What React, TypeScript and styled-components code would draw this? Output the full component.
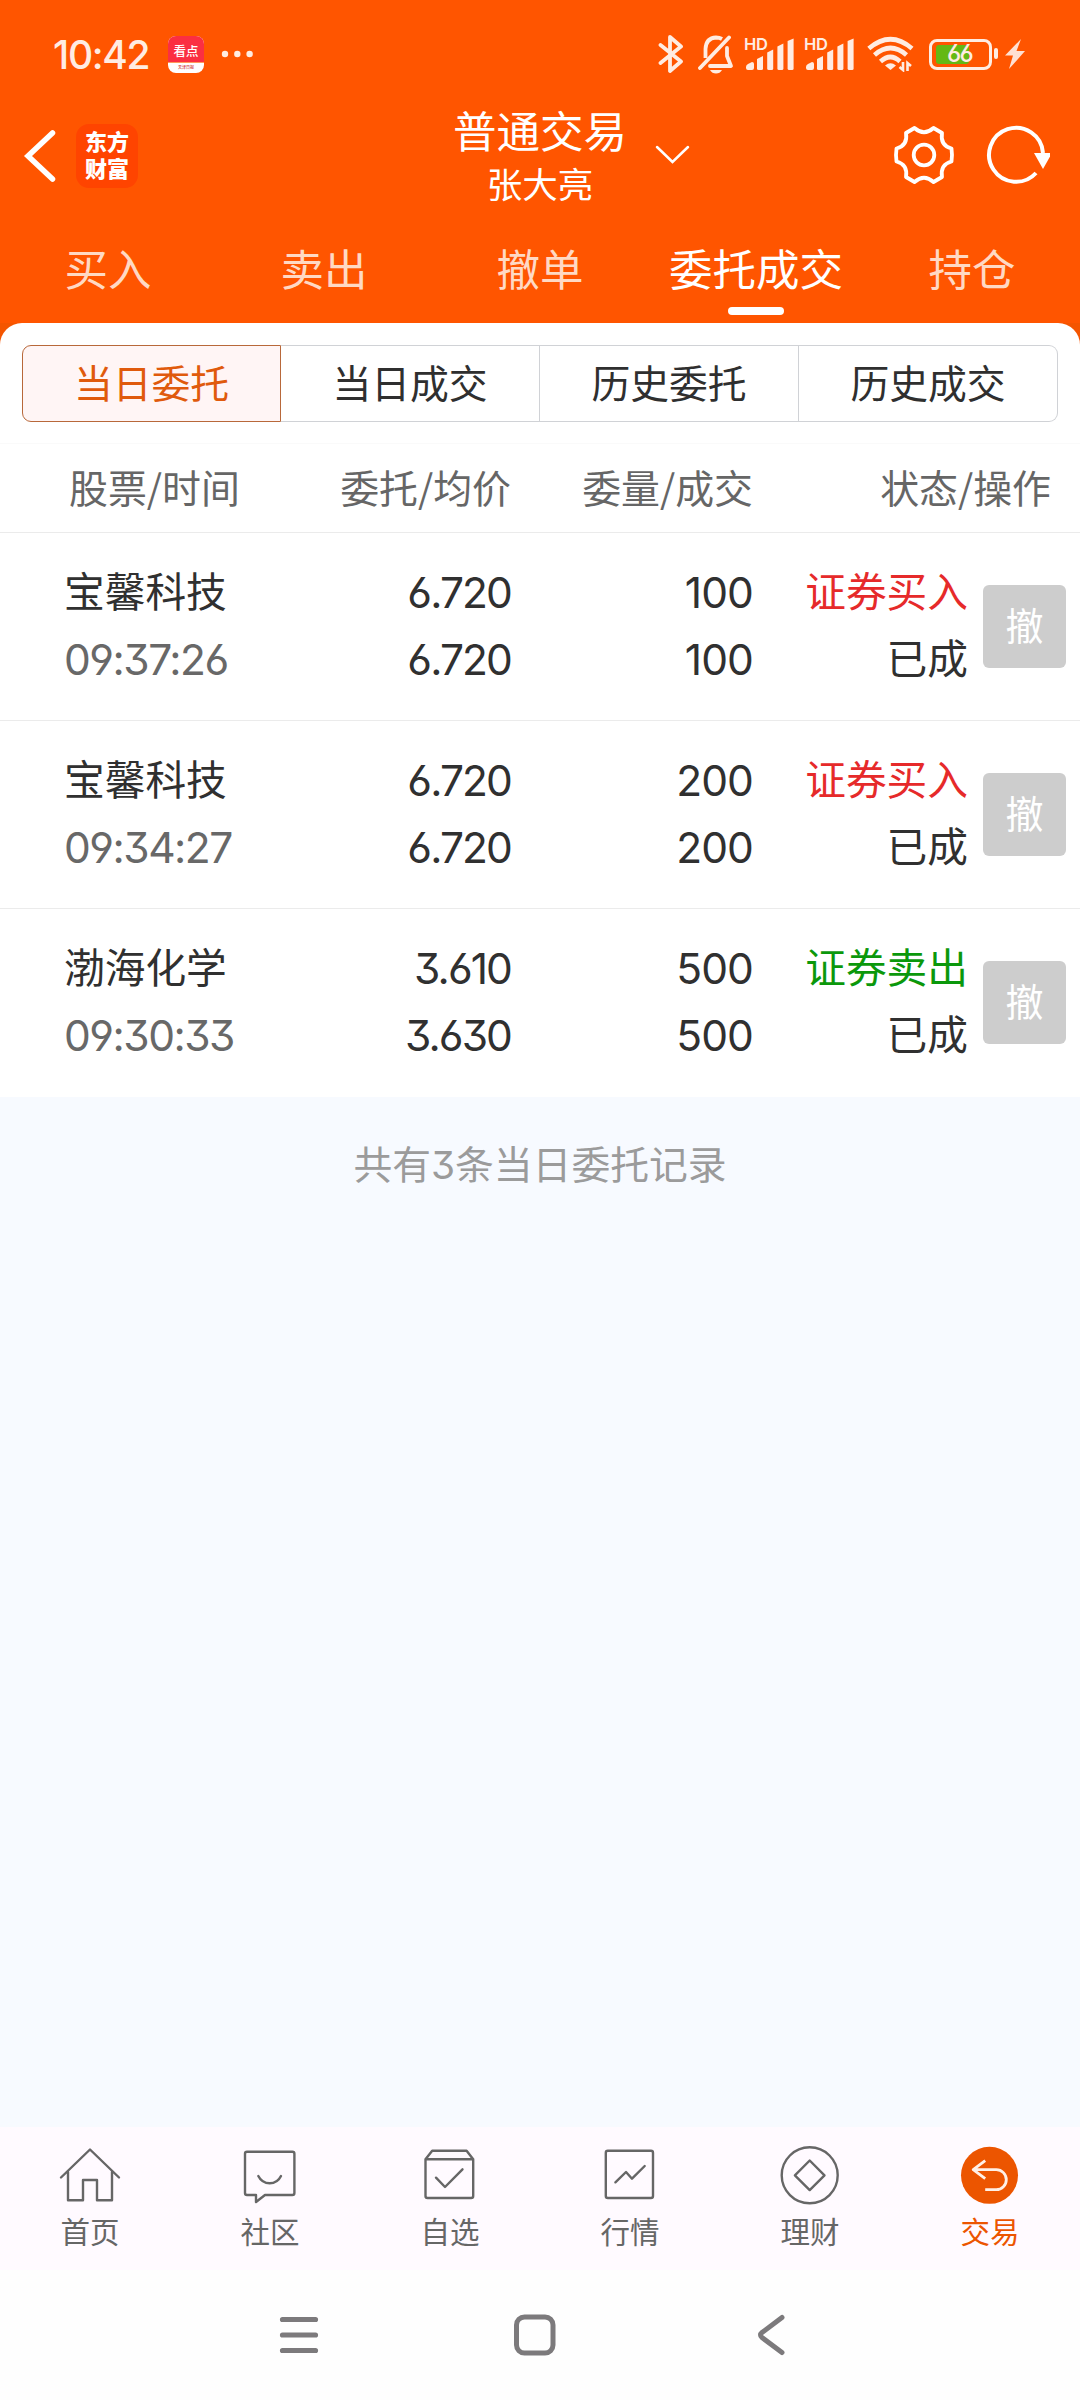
import React from "react";
import styled, { createGlobalStyle } from "styled-components";

const cjk = `"Noto Sans CJK SC", sans-serif`;
const mixed = `Inter, "Noto Sans CJK SC", sans-serif`;
const digits = `"cv03", "cv04", "cv09"`;

const GlobalStyle = createGlobalStyle`
  * { box-sizing: border-box; }
  body { margin: 0; background: #fff; }
  button { font: inherit; border: 0; padding: 0; background: none; color: inherit; }
  svg { display: block; flex: none; }
`;

const Screen = styled.div`
  width: 1080px;
  height: 2400px;
  display: flex;
  flex-direction: column;
  background: #f7faff;
  font-family: ${cjk};
  font-weight: 400;
  overflow: hidden;
`;

const Top = styled.header`
  height: 323px;
  flex: none;
  display: flex;
  flex-direction: column;
  background: #ff5500;
  color: #fff;
`;

const StatusBar = styled.div`
  height: 108px;
  padding: 0 55px 0 53px;
  display: flex;
  align-items: center;
  color: #ffece2;
`;

const Clock = styled.span`
  width: 115px;
  font: 500 39px/1 Inter, sans-serif;
  letter-spacing: -1.3px;
  white-space: nowrap;
`;

const NewsBadge = styled.span`
  width: 36px;
  height: 37px;
  border-radius: 8px;
  display: flex;
  flex-direction: column;
  overflow: hidden;
  background: #fff;
`;

const NewsTop = styled.span`
  height: 27px;
  padding-top: 4px;
  background: #fb2f42;
  border-bottom: 1px solid #ff9a5a;
  color: #fff;
  font: 500 12.5px/22px ${cjk};
  text-align: center;
`;

const NewsBottom = styled.span`
  color: #d0303a;
  font: 500 4px/8px ${cjk};
  text-align: center;
`;

const StatusIcons = styled.div`
  margin-left: auto;
  display: flex;
  align-items: center;
`;

const Gap = styled.span<{ $w: number }>`
  width: ${(p) => p.$w}px;
  flex: none;
`;

const SignalBox = styled.span`
  position: relative;
  width: 51px;
  height: 36px;
`;

const HdLabel = styled.span`
  position: absolute;
  left: 0;
  top: 1px;
  font: 600 16.5px/14px Inter, sans-serif;
  letter-spacing: -0.3px;
`;

const Battery = styled.span`
  width: 63px;
  height: 31px;
  border: 3px solid #ffece2;
  border-radius: 8px;
  padding: 3px 4px;
  display: flex;
`;

const BatteryFill = styled.span`
  width: 33px;
  border-radius: 3px;
  background: #64b814;
  display: flex;
  align-items: center;
  padding-left: 11px;
  font: 500 24px/1 Inter, sans-serif;
  font-feature-settings: ${digits};
  letter-spacing: -1.8px;
`;

const TitleBar = styled.div`
  height: 118px;
  display: grid;
  grid-template-columns: 440px 200px 1fr 190px;
`;

const Left = styled.div`
  display: flex;
  align-items: center;
  padding: 0 0 23px 22px;
  gap: 19px;
`;

const Logo = styled.div`
  width: 62px;
  height: 64px;
  border-radius: 13px;
  background: #ff4400;
  padding: 3px 9px 0;
  font: 900 22px/27px ${cjk};
  word-break: break-all;
`;

const Titles = styled.div`
  display: flex;
  flex-direction: column;
  align-items: center;
`;

const Title = styled.h1`
  margin: -2px 0 0;
  font-size: 43.5px;
  line-height: 48px;
  font-weight: 400;
`;

const Subtitle = styled.div`
  font-size: 35.5px;
  line-height: 58px;
`;

const Caret = styled.div`
  padding: 37px 0 0 14px;
`;

const Actions = styled.div`
  display: flex;
  gap: 28px;
  padding: 15px 0 0 2px;
`;

const Tabs = styled.nav`
  flex: 1;
  display: grid;
  grid-template-columns: repeat(5, 1fr);
`;

const Tab = styled.button<{ $active?: boolean }>`
  display: flex;
  flex-direction: column;
  align-items: center;
  padding-top: 9px;
  font-size: 43.5px;
  line-height: 66px;
  color: ${(p) => (p.$active ? "#fff" : "#ffd9c4")};
  &::after {
    content: "";
    width: 56px;
    height: 8px;
    margin-top: 6px;
    border-radius: 4px;
    background: ${(p) => (p.$active ? "#fff" : "transparent")};
  }
`;

const CardBack = styled.div`
  background: #f45500;
`;

const Card = styled.section`
  background: #fff;
  border-radius: 22px 22px 0 0;
  height: 120px;
  padding: 22px 22px 0;
`;

const Segments = styled.div`
  display: grid;
  grid-template-columns: repeat(4, 1fr);
`;

const Segment = styled.button<{ $active?: boolean }>`
  height: 77px;
  padding-bottom: 5px;
  border: 1px solid ${(p) => (p.$active ? "#b8683a" : "#d0d2d6")};
  border-left-width: ${(p) => (p.$active ? 1 : 0)}px;
  background: ${(p) => (p.$active ? "#fff5f5" : "#fff")};
  color: ${(p) => (p.$active ? "#e05a0c" : "#2f2f2f")};
  font-size: 38.8px;
  line-height: 70px;
  &:first-child { border-radius: 9px 0 0 9px; }
  &:last-child { border-radius: 0 9px 9px 0; }
`;

const HeadRow = styled.div`
  height: 90px;
  display: grid;
  grid-template-columns: 342px 169px 242px 1fr;
  padding: 0 29px 0 0;
  background: #fff;
  border-top: 1px solid #fafafa;
  border-bottom: 1px solid #ebebeb;
  color: #666;
  font-size: 38.9px;
  line-height: 84px;
  text-align: right;
  white-space: nowrap;
`;

const HeadCell = styled.span<{ $first?: boolean }>`
  display: flex;
  justify-content: ${(p) => (p.$first ? "flex-start" : "flex-end")};
  padding-left: ${(p) => (p.$first ? 69 : 0)}px;
`;

const Row = styled.div`
  height: 188px;
  padding-top: 25px;
  display: grid;
  grid-template-columns: 340px 171px 242px 215px 1fr;
  background: #fff;
  border-bottom: 1px solid #ebebeb;
  color: #303030;
  &:last-child { border-bottom: 0; }
`;

const Cell = styled.div<{ $first?: boolean }>`
  display: flex;
  flex-direction: column;
  align-items: ${(p) => (p.$first ? "flex-start" : "flex-end")};
  padding-left: ${(p) => (p.$first ? 64 : 0)}px;
  white-space: nowrap;
`;

const Word = styled.span`
  font-size: 40.7px;
  line-height: 64px;
  padding-bottom: 3px;
`;

const Num = styled.span<{ $muted?: boolean; $track?: number }>`
  font-family: Inter, sans-serif;
  font-feature-settings: ${digits};
  font-size: 42.5px;
  line-height: 64px;
  padding-top: 3px;
  letter-spacing: ${(p) => p.$track ?? -0.9}px;
  color: ${(p) => (p.$muted ? "#686868" : "inherit")};
`;

const Side = styled(Word)<{ $sell?: boolean }>`
  color: ${(p) => (p.$sell ? "#0b980b" : "#e62a2a")};
`;

const Cancel = styled.button`
  width: 83px;
  height: 83px;
  margin: 27px 0 0 15px;
  padding-bottom: 6px;
  border-radius: 6px;
  background: #cdcdcd;
  color: #fff;
  font-size: 38px;
  line-height: 76px;
`;

const Note = styled.p`
  margin: 0;
  padding-top: 38px;
  flex: 1;
  text-align: center;
  color: #9b9b9b;
  font-family: ${mixed};
  font-feature-settings: ${digits};
  font-size: 38.8px;
  line-height: 60px;
`;

const TabBar = styled.nav`
  height: 143px;
  flex: none;
  display: grid;
  grid-template-columns: repeat(6, 1fr);
  background: #fffaff;
`;

const BarItem = styled.button<{ $active?: boolean }>`
  display: flex;
  flex-direction: column;
  align-items: center;
  padding-top: 16px;
  font-size: 29.5px;
  line-height: 47px;
  color: ${(p) => (p.$active ? "#ec5500" : "#666")};
`;

const SystemNav = styled.div`
  height: 130px;
  flex: none;
  display: flex;
  justify-content: center;
  gap: 192px;
  padding: 43px 10px 0 0;
  background: #fefefe;
`;

const Signal = () => (
  <SignalBox>
    <HdLabel>HD</HdLabel>
    <svg width="51" height="36" fill="currentColor">
      <path d="M2 34v-3q0-2 2-3l4-2q2 0 2 2v4q0 2-2 2h-4q-2 0-2-2z" />
      <path d="M13 32.500v-9.500l6-3v12.500q0 1.500-1.500 1.500h-3q-1.500 0-1.500-1.500z" />
      <path d="M23.200 32.500v-16l6-3v19q0 1.500-1.500 1.500h-3q-1.500 0-1.500-1.500z" />
      <path d="M33.400 32.500v-22l6-3v25q0 1.500-1.500 1.500h-3q-1.500 0-1.500-1.500z" />
      <path d="M43.600 32.500v-27.500l6-2.500v30q0 1.500-1.500 1.500h-3q-1.500 0-1.500-1.500z" />
    </svg>
  </SignalBox>
);

const orders = [
  { name: "宝馨科技", time: "09:37:26", price: "6.720", avg: "6.720", qty: "100", sell: false },
  { name: "宝馨科技", time: "09:34:27", price: "6.720", avg: "6.720", qty: "200", sell: false },
  { name: "渤海化学", time: "09:30:33", price: "3.610", avg: "3.630", qty: "500", sell: true },
];

const barIcons: { label: string; art: React.ReactNode }[] = [
  {
    label: "首页",
    art: <path d="M3 34.5L32 6.5L61 34.5M10 29V57.3H25V37H39V57.3H54V29" />,
  },
  {
    label: "社区",
    art: (
      <>
        <path d="M9 8.7H54.4Q56.4 8.7 56.4 10.7V50Q56.4 52 54.4 52H27L18 59V52H9Q7 52 7 50V10.7Q7 8.7 9 8.7Z" />
        <path d="M20.3 33Q24 40.3 31.7 40.3T43 33" />
      </>
    ),
  },
  {
    label: "自选",
    art: (
      <>
        <path d="M7.5 16.3L14.2 7.7H48.6L55.2 16.3V53Q55.2 55 53.2 55H9.5Q7.5 55 7.5 53ZM7.5 16.3H55.2" />
        <path d="M18 34.7L27 44L44.5 26.3" />
      </>
    ),
  },
  {
    label: "行情",
    art: (
      <>
        <rect x="7.8" y="7.7" width="47.2" height="47.3" rx="2" />
        <path d="M17.4 39.3L28 29L34 35.7L46.7 23" />
      </>
    ),
  },
  {
    label: "理财",
    art: (
      <>
        <circle cx="31.7" cy="32.3" r="28" />
        <path d="M31.7 17.5L46.5 32.3L31.7 47.1L16.9 32.3Z" />
      </>
    ),
  },
  {
    label: "交易",
    art: (
      <>
        <circle cx="31.5" cy="32.3" r="28.5" fill="#ec5500" stroke="none" />
        <path stroke="#fff0e6" strokeWidth="2.8" strokeLinecap="butt" d="M27.2 17.7L15.2 26.7L27.2 35.7M15.2 26.7H38.3A10 10 0 0 1 38.3 46.7H27.2" />
      </>
    ),
  },
];

export default function App() {
  return (
    <Screen>
      <GlobalStyle />
      <Top>
        <StatusBar>
          <Clock>10:42</Clock>
          <NewsBadge>
            <NewsTop>看点</NewsTop>
            <NewsBottom>天津日报</NewsBottom>
          </NewsBadge>
          <Gap $w={17} />
          <svg width="34" height="8" fill="currentColor">
            <circle cx="4" cy="4" r="3.2" />
            <circle cx="16.3" cy="4" r="3.2" />
            <circle cx="28.6" cy="4" r="3.2" />
          </svg>
          <StatusIcons>
            <svg width="26" height="40" fill="none" stroke="currentColor" strokeWidth="3.8" strokeLinecap="round" strokeLinejoin="round">
              <path d="M2.5 11L23 27.5L12 37V3L23 12.5L2.5 29" />
            </svg>
            <Gap $w={14} />
            <svg width="36" height="40" viewBox="0 0 36 40" fill="none" stroke="currentColor" strokeWidth="3.8" strokeLinejoin="round">
              <path d="M2 34L31 3.5" strokeLinecap="round" />
              <path d="M7.5 24V15Q8 4 18 3.5Q21.5 3.5 24 5" />
              <path d="M29 14V22L33 32H12" strokeLinecap="round" />
              <path d="M12 36H24Q22 39.5 18 39.5T12 36Z" fill="currentColor" stroke="none" />
            </svg>
            <Gap $w={10} />
            <Signal />
            <Gap $w={9} />
            <Signal />
            <Gap $w={12} />
            <svg width="47" height="36" fill="none" stroke="currentColor" strokeWidth="4.6">
              <path d="M1.8 12.5Q23.5 -6 45 12.5" />
              <path d="M7.5 19Q23.5 5 39.5 19" />
              <path d="M13.5 25.5Q23.5 16.5 33 25.5" />
              <path d="M23.5 34L18 29.500Q23.5 25 29 29.500Z" fill="currentColor" stroke="none" />
              <path d="M36 26V34L32.500 31M40.5 35V27L44 30" strokeWidth="2.6" />
            </svg>
            <Gap $w={15} />
            <Battery>
              <BatteryFill>66</BatteryFill>
            </Battery>
            <Gap $w={2} />
            <svg width="5" height="12" fill="currentColor">
              <rect width="4" height="11" rx="2" />
            </svg>
            <Gap $w={6} />
            <svg width="20" height="30" fill="#ffe0d2">
              <path d="M16 0L0 16.5H8L4 30L20 12H11.5Z" />
            </svg>
          </StatusIcons>
        </StatusBar>
        <TitleBar>
          <Left>
            <svg width="35" height="54" fill="none" stroke="#fff" strokeWidth="5.5" strokeLinecap="round">
              <path d="M30.500 4L6 27L30.500 50" />
            </svg>
            <Logo>东方财富</Logo>
          </Left>
          <Titles>
            <Title>普通交易</Title>
            <Subtitle>张大亮</Subtitle>
          </Titles>
          <Caret>
            <svg width="38" height="20" fill="none" stroke="#fff" strokeWidth="2.5" strokeLinecap="round">
              <path d="M3 2L18.5 17L34 2" />
            </svg>
          </Caret>
          <Actions>
            <svg width="64" height="64" viewBox="-32 -32 64 64" fill="none" stroke="#fff" strokeWidth="3.8" strokeLinejoin="round">
              <path d="M-9.500 -27Q0 -18.500 9.500 -27L18 -22Q16 -9.500 27.500 -6.500Q28.500 0 27.500 6.500Q16 9.500 18 22L9.500 27Q0 18.500 -9.500 27L-18 22Q-16 9.500 -27.500 6.500Q-28.500 0 -27.500 -6.500Q-16 -9.500 -18 -22Z" />
              <circle r="10.3" />
            </svg>
            <svg width="66" height="64" viewBox="-32 -32 66 64" fill="none" stroke="#fff" strokeWidth="4">
              <path d="M27 -2A27 27 0 1 0 20 18" />
              <path d="M18 -2H36L27 14Z" fill="#fff" stroke="none" />
            </svg>
          </Actions>
        </TitleBar>
        <Tabs>
          <Tab>买入</Tab>
          <Tab>卖出</Tab>
          <Tab>撤单</Tab>
          <Tab $active>委托成交</Tab>
          <Tab>持仓</Tab>
        </Tabs>
      </Top>
      <CardBack>
        <Card>
          <Segments>
            <Segment $active>当日委托</Segment>
            <Segment>当日成交</Segment>
            <Segment>历史委托</Segment>
            <Segment>历史成交</Segment>
          </Segments>
        </Card>
      </CardBack>
      <HeadRow>
        <HeadCell $first>股票/时间</HeadCell>
        <HeadCell>委托/均价</HeadCell>
        <HeadCell>委量/成交</HeadCell>
        <HeadCell>状态/操作</HeadCell>
      </HeadRow>
      <div>
        {orders.map((o) => (
          <Row key={o.time}>
            <Cell $first>
              <Word>{o.name}</Word>
              <Num $muted $track={-1.5}>{o.time}</Num>
            </Cell>
            <Cell>
              <Num $track={-1.9}>{o.price}</Num>
              <Num $track={-1.9}>{o.avg}</Num>
            </Cell>
            <Cell>
              <Num>{o.qty}</Num>
              <Num>{o.qty}</Num>
            </Cell>
            <Cell>
              <Side $sell={o.sell}>{o.sell ? "证券卖出" : "证券买入"}</Side>
              <Word>已成</Word>
            </Cell>
            <Cancel>撤</Cancel>
          </Row>
        ))}
      </div>
      <Note>共有3条当日委托记录</Note>
      <TabBar>
        {barIcons.map((b, i) => (
          <BarItem key={b.label} $active={i === 5}>
            <svg width="64" height="64" fill="none" stroke="#666" strokeWidth="2.4" strokeLinecap="round" strokeLinejoin="round">
              {b.art}
            </svg>
            {b.label}
          </BarItem>
        ))}
      </TabBar>
      <SystemNav>
        <svg width="44" height="44" fill="none" stroke="#7c7a7c" strokeWidth="5.2" strokeLinecap="round">
          <path d="M5.5 6.5H38.5M5.5 22H38.5M5.5 37.5H38.5" />
        </svg>
        <svg width="44" height="44" fill="none" stroke="#7c7a7c" strokeWidth="5">
          <rect x="3.500" y="4" width="36.5" height="36" rx="8" />
        </svg>
        <svg width="44" height="44" fill="none" stroke="#7c7a7c" strokeWidth="5" strokeLinecap="round" strokeLinejoin="round">
          <path d="M33 4.5L13 19.5Q10 22 13 24.5L33 39.5" />
        </svg>
      </SystemNav>
    </Screen>
  );
}
